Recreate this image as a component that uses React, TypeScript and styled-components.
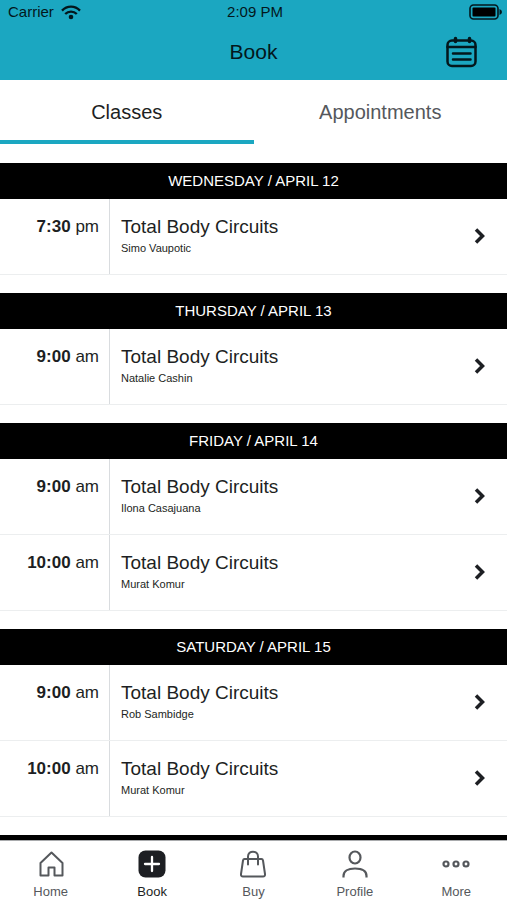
import React, { useState } from 'react';
import styled, { createGlobalStyle } from 'styled-components';

const teal = '#1ba7c1';
const ink = '#1d1f23';
const muted = '#55585c';

const GlobalStyle = createGlobalStyle`
  *, *::before, *::after { box-sizing: border-box; }
  body {
    margin: 0;
    background: #fff;
    color: ${ink};
    font-family: "Liberation Sans", Arial, sans-serif;
  }
  h1, h2, h3, p, ul { margin: 0; padding: 0; font-weight: 400; }
  ul { list-style: none; }
  button { border: 0; background: none; padding: 0; font: inherit; color: inherit; cursor: pointer; }
  svg { display: block; }
`;

const Screen = styled.div`
  display: flex;
  flex-direction: column;
  height: 100vh;
  overflow: hidden;
`;

const Header = styled.header`
  flex: none;
  background: ${teal};
  color: #03171c;
  height: 80px;
`;

const StatusBar = styled.div`
  display: grid;
  grid-template-columns: 1fr auto 1fr;
  align-items: center;
  height: 24px;
  padding: 0 5px 0 8px;
  font-size: 15px;
  line-height: 24px;
`;

const Carrier = styled.div`
  display: flex;
  align-items: center;
  gap: 7px;
`;

const BatterySlot = styled.div`
  justify-self: end;
`;

const TitleBar = styled.div`
  display: grid;
  grid-template-columns: 1fr auto 1fr;
  align-items: center;
  height: 56px;
  padding: 0 30px;
`;

const Title = styled.h1`
  grid-column: 2;
  font-size: 21px;
  line-height: 24px;
`;

const CalendarButton = styled.button`
  justify-self: end;
`;

const Tabs = styled.div`
  flex: none;
  display: grid;
  grid-template-columns: 1fr 1fr;
  height: 64px;
`;

const Tab = styled.button<{ $active: boolean }>`
  border-bottom: 4px solid ${(p) => (p.$active ? teal : 'transparent')};
  color: ${(p) => (p.$active ? ink : muted)};
  font-size: 20px;
  line-height: 24px;
  padding-top: 4px;
`;

const Schedule = styled.main`
  flex: 1;
  min-height: 0;
  overflow-y: auto;
  scrollbar-width: none;
  display: flex;
  flex-direction: column;
  gap: 18px;
  padding-top: 19px;
`;

const Day = styled.section`
  flex: none;
`;

const DayHeading = styled.h2`
  height: 36px;
  background: #000;
  color: #fff;
  font-size: 15px;
  line-height: 35px;
  text-align: center;
`;

const DayBar = styled.div`
  flex: none;
  height: 36px;
  background: #000;
`;

const ClassRow = styled.button`
  display: grid;
  grid-template-columns: 110px 1fr auto;
  width: 100%;
  height: 76px;
  border-bottom: 1px solid #eceeef;
  text-align: left;
`;

const Time = styled.span`
  height: 100%;
  border-right: 1px solid #d9dcdf;
  padding: 17px 10px 0 0;
  text-align: right;
  font-size: 17px;
  line-height: 22px;
`;

const Info = styled.span`
  display: flex;
  flex-direction: column;
  gap: 1px;
  height: 100%;
  padding: 16px 0 0 11px;
`;

const ClassName = styled.span`
  font-size: 19px;
  line-height: 24px;
`;

const Teacher = styled.span`
  font-size: 11px;
  line-height: 16px;
`;

const ChevronSlot = styled.span`
  align-self: center;
  padding: 0 20px 2px 0;
`;

const BottomNav = styled.nav`
  flex: none;
  display: grid;
  grid-template-columns: repeat(5, 1fr);
  height: 60px;
  border-top: 1px solid #a9abad;
  background: #fff;
`;

const NavItem = styled.button<{ $active: boolean }>`
  display: flex;
  flex-direction: column;
  align-items: center;
  gap: 5px;
  padding-top: 8px;
  color: ${(p) => (p.$active ? ink : muted)};
  font-size: 13px;
  line-height: 16px;
`;

const WifiIcon = () => (
  <svg width="20" height="15" viewBox="0 0 20 15" fill="none" stroke="currentColor" strokeWidth="2.3" aria-hidden="true">
    <path d="M1 5.6C6 .4 14 .4 19 5.6" />
    <path d="M4.2 9C7.4 5.7 12.6 5.7 15.8 9" />
    <circle cx="10" cy="12" r="2.300" fill="currentColor" stroke="none" />
  </svg>
);

const BatteryIcon = () => (
  <svg width="33" height="16" viewBox="0 0 33 16" fill="none" aria-hidden="true">
    <rect x="1" y="1" width="28" height="14" rx="3.500" stroke="currentColor" strokeWidth="1.600" />
    <rect x="3.500" y="3.500" width="23" height="9" rx="1" fill="#000" />
    <path d="M30.500 5Q33 6 33 8T30.500 11Z" fill="currentColor" />
  </svg>
);

const CalendarIcon = () => (
  <svg width="32" height="32" viewBox="0 0 32 32" fill="none" stroke="currentColor" strokeWidth="2.500" strokeLinecap="round" aria-hidden="true">
    <rect x="2.500" y="4.500" width="28" height="25.500" rx="4.500" />
    <path d="M2.500 11H30.500" />
    <path d="M10.500 2.500V5.500M24.500 2.500V5.500" strokeWidth="3.500" />
    <path d="M8 17.500H25.500M8 23.500H25.500" strokeWidth="2.500" />
  </svg>
);

const ChevronIcon = () => (
  <svg width="14" height="18" viewBox="0 0 14 18" fill="none" stroke={ink} strokeWidth="3.500" aria-hidden="true">
    <path d="M3 2.500 9.500 9 3 15.500" />
  </svg>
);

const HomeIcon = () => (
  <svg width="30" height="30" viewBox="0 0 30 30" fill="none" stroke="currentColor" strokeWidth="2" strokeLinejoin="round" aria-hidden="true">
    <path d="M15.500 3.500 4.500 14V26.500H12.500V18.500H18.500V26.500H26.500V14Z" />
  </svg>
);

const BookIcon = () => (
  <svg width="30" height="30" viewBox="0 0 30 30" aria-hidden="true">
    <rect x="1.500" y="1.500" width="27" height="27" rx="7" fill="currentColor" />
    <path d="M15 8V22M8 15H22" stroke="#fff" strokeWidth="2.300" strokeLinecap="round" />
  </svg>
);

const BagIcon = () => (
  <svg width="30" height="30" viewBox="0 0 30 30" fill="none" stroke="currentColor" strokeWidth="2" strokeLinejoin="round" strokeLinecap="round" aria-hidden="true">
    <path d="M6.500 10H23.500Q24.700 10 25 11.500L27 25Q27.200 27.500 25 27.500H5Q2.800 27.500 3 25L5 11.500Q5.300 10 6.500 10Z" />
    <path d="M10 15.500V7.500C10 1 20 1 20 7.500V15.500" />
  </svg>
);

const ProfileIcon = () => (
  <svg width="30" height="30" viewBox="0 0 30 30" fill="none" stroke="currentColor" strokeWidth="2.200" aria-hidden="true">
    <ellipse cx="15" cy="8.500" rx="5.500" ry="6" />
    <path d="M3.500 28.500V27C3.500 22 8 19.500 15 19.500S26.500 22 26.500 27V28.500" />
  </svg>
);

const MoreIcon = () => (
  <svg width="30" height="30" viewBox="0 0 30 30" fill="none" stroke="currentColor" strokeWidth="2.200" aria-hidden="true">
    <circle cx="5" cy="15" r="2.500" />
    <circle cx="15" cy="15" r="2.500" />
    <circle cx="25" cy="15" r="2.500" />
  </svg>
);

const days = [
  { title: 'WEDNESDAY / APRIL 12', classes: [{ time: '7:30', half: 'pm', teacher: 'Simo Vaupotic' }] },
  { title: 'THURSDAY / APRIL 13', classes: [{ time: '9:00', half: 'am', teacher: 'Natalie Cashin' }] },
  {
    title: 'FRIDAY / APRIL 14',
    classes: [
      { time: '9:00', half: 'am', teacher: 'Ilona Casajuana' },
      { time: '10:00', half: 'am', teacher: 'Murat Komur' },
    ],
  },
  {
    title: 'SATURDAY / APRIL 15',
    classes: [
      { time: '9:00', half: 'am', teacher: 'Rob Sambidge' },
      { time: '10:00', half: 'am', teacher: 'Murat Komur' },
    ],
  },
];

const navItems = [
  { label: 'Home', Icon: HomeIcon },
  { label: 'Book', Icon: BookIcon },
  { label: 'Buy', Icon: BagIcon },
  { label: 'Profile', Icon: ProfileIcon },
  { label: 'More', Icon: MoreIcon },
];

export default function App() {
  const [tab, setTab] = useState('Classes');
  const [page, setPage] = useState('Book');

  return (
    <>
      <GlobalStyle />
      <Screen>
        <Header>
          <StatusBar>
            <Carrier>
              Carrier
              <WifiIcon />
            </Carrier>
            <span>2:09 PM</span>
            <BatterySlot>
              <BatteryIcon />
            </BatterySlot>
          </StatusBar>
          <TitleBar>
            <Title>Book</Title>
            <CalendarButton type="button" aria-label="Calendar">
              <CalendarIcon />
            </CalendarButton>
          </TitleBar>
        </Header>
        <Tabs role="tablist">
          {['Classes', 'Appointments'].map((name) => (
            <Tab
              key={name}
              type="button"
              role="tab"
              aria-selected={tab === name}
              $active={tab === name}
              onClick={() => setTab(name)}
            >
              {name}
            </Tab>
          ))}
        </Tabs>
        <Schedule>
          {days.map((day) => (
            <Day key={day.title}>
              <DayHeading>{day.title}</DayHeading>
              <ul>
                {day.classes.map((item) => (
                  <li key={item.time}>
                    <ClassRow type="button">
                      <Time>
                        <b>{item.time}</b> {item.half}
                      </Time>
                      <Info>
                        <ClassName>Total Body Circuits</ClassName>
                        <Teacher>{item.teacher}</Teacher>
                      </Info>
                      <ChevronSlot>
                        <ChevronIcon />
                      </ChevronSlot>
                    </ClassRow>
                  </li>
                ))}
              </ul>
            </Day>
          ))}
          <DayBar />
        </Schedule>
        <BottomNav>
          {navItems.map(({ label, Icon }) => (
            <NavItem
              key={label}
              type="button"
              aria-current={page === label ? 'page' : undefined}
              $active={page === label}
              onClick={() => setPage(label)}
            >
              <Icon />
              {label}
            </NavItem>
          ))}
        </BottomNav>
      </Screen>
    </>
  );
}
